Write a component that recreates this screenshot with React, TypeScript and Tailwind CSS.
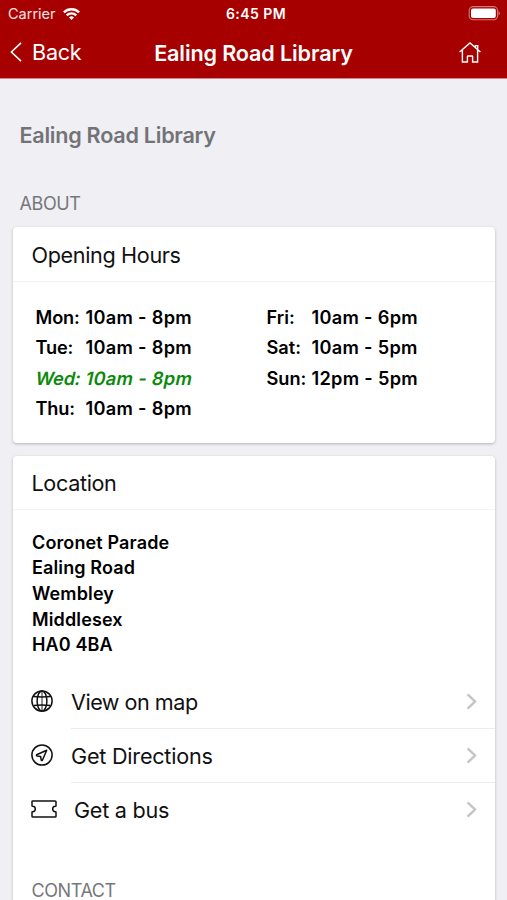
import type { ReactNode } from "react";

const weekStart = [
    { day: "Mon:", hours: "10am - 8pm" },
    { day: "Tue:", hours: "10am - 8pm" },
    { day: "Wed:", hours: "10am - 8pm", today: true },
    { day: "Thu:", hours: "10am - 8pm" },
];

const weekEnd = [
    { day: "Fri:", hours: "10am - 6pm" },
    { day: "Sat:", hours: "10am - 5pm" },
    { day: "Sun:", hours: "12pm - 5pm" },
];

const address = ["Coronet Parade", "Ealing Road", "Wembley", "Middlesex", "HA0 4BA"];

function GlobeIcon() {
    return (
        <svg className="w-[22px] h-[22px]" viewBox="0 0 22 22" fill="none" stroke="currentColor" strokeWidth={1.5}>
            <circle cx="11" cy="11" r="10.1" />
            <ellipse cx="11" cy="11" rx="4.9" ry="10.1" />
            <path d="M2.4 6.6c5 .5 12.2.5 17.2 0M2.4 15.4c5-.5 12.2-.5 17.2 0" />
            <path d="M11 .9v20.2" strokeWidth={0.9} />
        </svg>
    );
}

function NavigateIcon() {
    return (
        <svg className="w-[22px] h-[22px]" viewBox="0 0 22 22" fill="none" stroke="currentColor" strokeWidth={1.5} strokeLinejoin="round">
            <circle cx="11" cy="11" r="10.1" />
            <path d="M15.7 6.3 5.6 10.8q-.5.9.5 1.2l3.5.5.6 3.4q.5 1.1 1.2.3z" />
        </svg>
    );
}

function TicketIcon() {
    return (
        <svg className="w-[26px] h-[18px]" viewBox="0 0 26 18" fill="none" stroke="currentColor" strokeWidth={1.5} strokeLinejoin="round">
            <path d="M1.9.9h22.2q.9 0 .9.9v3.9q0 .6-.6.6a2.7 2.7 0 0 0 0 5.4q.6 0 .6.6v3.9q0 .9-.9.9H1.9q-.9 0-.9-.9v-3.9q0-.6.6-.6a2.7 2.7 0 0 0 0-5.4q-.6 0-.6-.6V1.8q0-.9.9-.9z" />
        </svg>
    );
}

function Hours({ rows, dayClass }: { rows: { day: string; hours: string; today?: boolean }[]; dayClass: string }) {
    return (
        <div className="text-[18.2px] leading-[30.6px] font-semibold text-black">
            {rows.map((row) => (
                <div key={row.day} className={row.today ? "flex -skew-x-12 text-[#0a8a0a]" : "flex"}>
                    <span className={dayClass}>{row.day}</span>
                    <span className="tracking-[0.3px]">{row.hours}</span>
                </div>
            ))}
        </div>
    );
}

function LinkRow({ icon, label, labelClass, last }: { icon: ReactNode; label: string; labelClass: string; last?: boolean }) {
    return (
        <div className="flex h-[53.7px] pl-[18px]">
            <div className="flex items-center shrink-0 pb-[2px]">{icon}</div>
            <div
                className={
                    last
                        ? "flex flex-1 items-center justify-between ml-[17px] pr-[18px]"
                        : "flex flex-1 items-center justify-between ml-[18px] pr-[18px] border-b border-[#ececee]"
                }
            >
                <span className={labelClass}>{label}</span>
                <svg className="w-[11px] h-[17px]" viewBox="0 0 11 17" fill="none" stroke="#c4c4c6" strokeWidth={2.4}>
                    <path d="m1.6 1.4 7.4 7.1-7.4 7.1" />
                </svg>
            </div>
        </div>
    );
}

export default function App() {
    return (
        <div className="h-[900px] overflow-hidden bg-[#efeff4] font-['Inter','Liberation_Sans',sans-serif] text-[#111]">
            {/* Status bar and navigation */}
            <header className="h-[79px] bg-[#a60000] border-b border-[#cf8a8c] text-white">
                <div className="grid grid-cols-3 items-center h-[27px] pl-2 pr-[7px]">
                    <div className="flex items-center gap-[7px] text-[14.5px] text-white/90">
                        <span>Carrier</span>
                        <svg className="w-[17px] h-[12px]" viewBox="0 0 17 12" fill="none" stroke="#fff" strokeWidth={2.3}>
                            <path d="M.9 4.4a10.8 10.8 0 0 1 15.2 0M3.7 7.4a6.7 6.7 0 0 1 9.6 0" />
                            <path d="m8.5 12-2.5-2.6a3.6 3.6 0 0 1 5 0z" fill="#fff" stroke="none" />
                        </svg>
                    </div>
                    <div className="pl-[4px] text-center text-[14px] font-semibold tracking-[0.45px]">6:45 PM</div>
                    <svg className="justify-self-end w-[32px] h-[15px]" viewBox="0 0 32 15" fill="none">
                        <rect x="1.2" y=".6" width="28.4" height="13.2" rx="4" stroke="#d07a7a" strokeWidth={1.1} />
                        <rect x="3" y="2.4" width="24.8" height="9.6" rx="2" fill="#fff" />
                        <path d="M30.6 5.2q1.3.7 1.3 2.1t-1.3 2.1z" fill="#d07a7a" />
                    </svg>
                </div>
                <div className="grid grid-cols-[110px_1fr_110px] items-center h-[51px]">
                    <div className="flex items-center gap-[10px] pl-[10px]">
                        <svg className="w-[12px] h-[20px]" viewBox="0 0 12 20" fill="none" stroke="currentColor" strokeWidth={1.6}>
                            <path d="M11 .8 1.4 10l9.6 9.2" />
                        </svg>
                        <span className="text-[21.6px] tracking-[-0.25px]">Back</span>
                    </div>
                    <h1 className="pt-px text-center text-[21.6px] font-semibold tracking-[-0.13px] whitespace-nowrap">Ealing Road Library</h1>
                    <svg className="justify-self-end mr-[26px] w-[22px] h-[21px]" viewBox="0 0 22 21" fill="none" stroke="currentColor" strokeWidth={1.4}>
                        <path d="M.6 10 11 1l10.4 9M16.4 5.4V3.6h2.3v4M3.4 8v12h5v-5.4q0-.6.6-.6h4q.6 0 .6.6V20h5V8" />
                    </svg>
                </div>
            </header>

            <main>
                <h2 className="pl-[19.5px] pt-[41px] text-[21.6px] leading-[30px] font-semibold tracking-[-0.26px] text-[#737377]">Ealing Road Library</h2>
                <h3 className="pl-[19.5px] pt-[41px] text-[18px] leading-[26px] tracking-[-0.4px] text-[#77777b]">ABOUT</h3>

                {/* Opening hours */}
                <section className="mt-[10px] ml-[13px] mr-[12px] h-[216px] rounded-[4px] bg-white shadow-[0_1px_3px_rgba(0,0,0,0.25)]">
                    <h4 className="h-[55px] pl-[18.5px] border-b border-[#f0f0f0] text-[21.6px] leading-[56px] tracking-[-0.35px]">Opening Hours</h4>
                    <div className="grid grid-cols-[231px_1fr] pl-[22.5px] pt-[19.7px]">
                        <Hours rows={weekStart} dayClass="w-[50px] tracking-[-0.15px]" />
                        <Hours rows={weekEnd} dayClass="w-[45px]" />
                    </div>
                </section>

                {/* Location */}
                <section className="mt-[13px] ml-[13px] mr-[12px] h-[500px] rounded-[4px] bg-white shadow-[0_1px_3px_rgba(0,0,0,0.25)]">
                    <h4 className="h-[54px] pl-[18.5px] border-b border-[#f4f4f4] text-[21.6px] leading-[54px] tracking-[-0.35px]">Location</h4>
                    <div className="pl-[19px] pt-[19.5px] pb-[17.5px] text-[18px] leading-[25.7px] font-semibold tracking-[0.13px] text-black">
                        {address.map((line) => (
                            <p key={line}>{line}</p>
                        ))}
                    </div>
                    <LinkRow icon={<GlobeIcon />} label="View on map" labelClass="text-[21.6px] tracking-[-0.5px]" />
                    <LinkRow icon={<NavigateIcon />} label="Get Directions" labelClass="pt-px text-[21.6px] tracking-[-0.22px]" />
                    <LinkRow icon={<TicketIcon />} label="Get a bus" labelClass="text-[21.6px] tracking-[-0.25px]" last />
                    <h3 className="pl-[18.5px] pt-[41px] text-[18px] leading-[26px] tracking-[-0.4px] text-[#77777b]">CONTACT</h3>
                </section>
            </main>
        </div>
    );
}
